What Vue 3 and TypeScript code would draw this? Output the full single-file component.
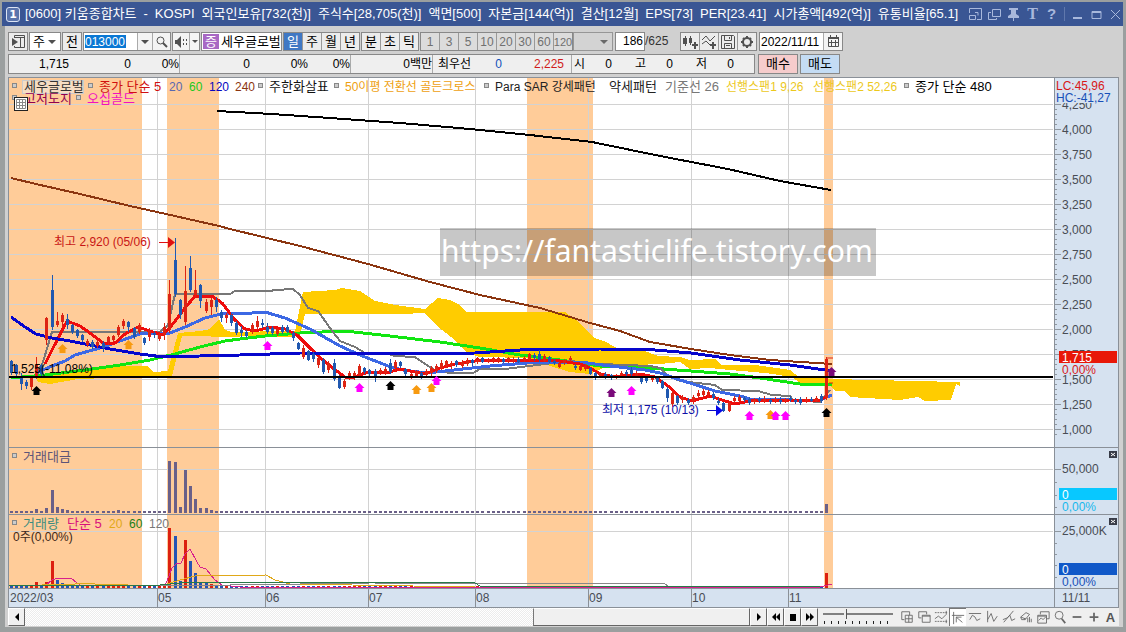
<script setup lang="ts">
import { ref } from 'vue'

type Candle = [x: number, high: number, top: number, bottom: number, low: number, up: 0 | 1]

const bands = [[9, 133], [167, 52], [527, 66], [824, 9]]
const months: [number, string][] = [[157, '05'], [265, '06'], [368, '07'], [475, '08'], [588, '09'], [691, '10'], [788, '11']]
const prices = ['4,000', '3,750', '3,500', '3,250', '3,000', '2,750', '2,500', '2,250', '2,000', '1,750', '1,500', '1,250', '1,000']

const candles: Candle[] = [
  [11, 360, 361, 373, 375, 0], [16, 364, 365, 374, 376, 0], [21, 373, 376, 384, 390, 0], [26, 380, 382, 386, 389, 0], [31, 376, 377, 387, 390, 1],
  [36, 357, 365, 376, 379, 1], [41, 364, 365, 374, 377, 0], [46, 317, 318, 340, 345, 1], [52, 275, 290, 327, 330, 0], [57, 312, 321, 325, 327, 1],
  [62, 313, 315, 322, 327, 1], [67, 314, 319, 325, 329, 0], [72, 324, 325, 332, 334, 0], [77, 329, 330, 336, 338, 0], [82, 334, 335, 340, 342, 0],
  [87, 339, 341, 345, 347, 1], [92, 340, 342, 347, 349, 0], [97, 340, 342, 346, 348, 1], [103, 341, 343, 348, 352, 0], [108, 336, 337, 342, 345, 1],
  [113, 335, 336, 340, 342, 1], [118, 325, 327, 335, 337, 1], [123, 319, 321, 326, 329, 1], [128, 321, 322, 327, 332, 0], [134, 327, 328, 337, 339, 0],
  [139, 323, 325, 332, 334, 1], [144, 337, 338, 343, 345, 0], [149, 328, 330, 337, 341, 1], [154, 331, 333, 335, 338, 0], [159, 333, 335, 339, 341, 1],
  [164, 323, 327, 335, 340, 1], [169, 280, 294, 330, 333, 1], [175, 238, 260, 294, 297, 0], [180, 299, 300, 315, 319, 0], [185, 266, 291, 322, 325, 1],
  [190, 256, 268, 290, 292, 0], [195, 270, 290, 295, 297, 1], [200, 284, 285, 301, 308, 0], [206, 299, 302, 311, 313, 1], [211, 298, 300, 307, 315, 1],
  [216, 297, 300, 307, 312, 0], [221, 310, 312, 318, 322, 0], [226, 313, 315, 318, 323, 1], [231, 313, 315, 323, 326, 0], [236, 321, 323, 333, 335, 0],
  [241, 326, 330, 333, 337, 0], [246, 330, 332, 336, 338, 0], [252, 323, 325, 331, 334, 1], [257, 316, 321, 327, 329, 1], [262, 319, 323, 325, 328, 0],
  [267, 323, 327, 332, 334, 0], [272, 326, 328, 333, 335, 0], [277, 328, 329, 334, 336, 1], [282, 325, 327, 332, 334, 0], [287, 325, 327, 332, 333, 0],
  [293, 331, 333, 338, 341, 0], [298, 342, 343, 349, 350, 0], [303, 345, 348, 357, 359, 1], [308, 350, 351, 360, 361, 0], [313, 352, 354, 359, 362, 0],
  [318, 357, 358, 365, 368, 1], [323, 358, 360, 372, 374, 0], [328, 361, 363, 370, 373, 1], [334, 359, 363, 379, 381, 0], [339, 375, 377, 388, 389, 0],
  [344, 379, 381, 387, 389, 1], [349, 371, 373, 378, 380, 1], [354, 371, 373, 378, 380, 1], [359, 364, 366, 375, 377, 1], [364, 367, 368, 372, 374, 0],
  [369, 369, 370, 374, 376, 0], [375, 369, 371, 377, 382, 0], [380, 368, 370, 373, 375, 1], [385, 367, 369, 373, 375, 1], [390, 359, 363, 372, 374, 0],
  [395, 360, 362, 368, 371, 1], [400, 361, 362, 366, 368, 0], [405, 368, 369, 374, 376, 0], [411, 372, 374, 376, 379, 1], [416, 370, 371, 376, 378, 1],
  [421, 371, 373, 377, 379, 0], [426, 369, 371, 375, 377, 1], [431, 366, 368, 373, 376, 1], [436, 364, 366, 370, 373, 1], [441, 360, 363, 368, 370, 1],
  [446, 360, 361, 366, 368, 1], [451, 361, 363, 366, 369, 1], [456, 360, 361, 365, 367, 0], [462, 360, 362, 366, 368, 1], [467, 358, 360, 364, 366, 1],
  [472, 359, 360, 363, 366, 0], [477, 357, 358, 362, 364, 1], [482, 357, 358, 362, 363, 0], [488, 358, 359, 361, 363, 1], [493, 357, 358, 361, 363, 1],
  [498, 357, 358, 361, 363, 1], [503, 358, 359, 362, 363, 0], [508, 357, 358, 361, 363, 1], [513, 357, 359, 361, 363, 1], [518, 357, 359, 362, 363, 0],
  [524, 356, 358, 360, 362, 1], [529, 353, 354, 360, 361, 1], [534, 353, 355, 358, 361, 0], [539, 350, 354, 360, 362, 0], [544, 354, 356, 361, 362, 1],
  [549, 356, 357, 362, 363, 0], [554, 359, 361, 363, 365, 0], [559, 361, 363, 367, 368, 1], [564, 359, 360, 363, 365, 1], [570, 356, 358, 360, 362, 1],
  [575, 364, 366, 368, 370, 0], [580, 364, 366, 370, 371, 1], [585, 364, 366, 369, 371, 1], [590, 367, 368, 374, 375, 0], [595, 372, 373, 377, 380, 0],
  [600, 372, 373, 376, 378, 1], [605, 372, 374, 378, 379, 0], [611, 374, 375, 378, 380, 0], [616, 374, 376, 378, 379, 1], [621, 371, 373, 375, 377, 1],
  [626, 370, 372, 374, 376, 0], [631, 367, 370, 374, 376, 0], [636, 371, 373, 376, 378, 1], [641, 376, 377, 382, 384, 0], [646, 376, 378, 381, 383, 0],
  [652, 375, 377, 380, 382, 1], [657, 377, 378, 382, 384, 0], [662, 380, 381, 388, 389, 0], [667, 387, 389, 398, 402, 0], [672, 391, 393, 404, 407, 1],
  [677, 395, 396, 403, 405, 0], [682, 395, 397, 400, 403, 1], [688, 398, 400, 403, 405, 0], [693, 395, 397, 401, 404, 1], [698, 390, 393, 396, 399, 1],
  [703, 389, 391, 395, 397, 1], [708, 390, 392, 395, 397, 1], [713, 392, 394, 398, 400, 0], [718, 398, 401, 403, 405, 0], [723, 402, 403, 411, 412, 0],
  [729, 402, 403, 411, 412, 1], [734, 396, 398, 401, 403, 1], [739, 395, 397, 401, 403, 1], [744, 396, 398, 400, 402, 0], [749, 397, 399, 403, 405, 0],
  [754, 398, 400, 402, 404, 1], [759, 397, 399, 401, 403, 0], [764, 396, 399, 401, 403, 1], [770, 398, 400, 402, 404, 0], [775, 397, 399, 401, 403, 1],
  [780, 397, 400, 402, 404, 0], [785, 398, 399, 401, 403, 1], [790, 396, 398, 400, 402, 0], [795, 398, 400, 402, 404, 0], [800, 397, 399, 403, 405, 0],
  [806, 397, 399, 401, 403, 1], [811, 397, 399, 401, 402, 0], [816, 396, 398, 401, 402, 1], [821, 394, 396, 401, 403, 0], [826, 357, 359, 398, 400, 1],
]

const lines: { color: string; width: number; points: string }[] = [
  { color: '#12e612', width: 3, points: '11,378 45,375 85,370 120,365 150,360 175,354 200,347 225,341 240,339 265,336 300,333 345,331 390,336 440,342 480,348 520,355 560,360 600,366 650,368 691,371 730,374 760,378 800,384 832,385' },
  { color: '#777777', width: 2, points: '36,371 42,365 52,332 160,332 168,325 175,294 230,294 235,291 270,291 275,290 293,289 300,295 308,308 318,311 330,328 340,341 355,347 365,353 385,353 395,356 415,357 425,364 435,370 450,373 473,373 480,369 505,369 545,364 570,361 600,364 650,366 660,368 668,376 680,381 715,385 722,390 758,391 772,395 790,396 793,400 820,402 830,390' },
  { color: '#3c68e4', width: 3, points: '36,373 52,366 65,361 75,355 100,348 120,341 140,334 170,333 185,327 205,318 225,313 240,314 265,312 285,318 310,329 340,346 360,355 388,366 403,370 427,373 445,371 490,366 540,362 580,362 610,366 645,370 660,373 677,379 693,384 715,391 740,396 750,399 790,400 820,400 832,395' },
  { color: '#ee0c0c', width: 3, points: '45,364 52,350 67,321 80,326 90,333 103,343 115,343 125,334 138,327 150,331 163,335 172,325 185,308 195,296 212,296 222,303 235,320 245,329 255,331 270,327 285,329 297,335 310,348 325,362 345,377 355,377 368,372 390,372 400,369 425,374 440,368 455,364 475,361 500,360 530,360 560,361 580,364 590,368 600,374 615,377 640,374 655,377 668,386 680,397 692,401 710,396 725,401 735,404 750,401 790,400 820,400 826,397' },
  { color: '#0606cc', width: 3, points: '11,317 25,327 36,334 52,338 70,341 110,349 140,354 163,357 200,356 240,355 300,353 430,354 475,353 520,350 600,349 655,350 691,353 740,360 790,365 832,371' },
  { color: '#8b3510', width: 2, points: '11,178 36,184 80,194 130,206 166,214 219,226 230,229 300,246 368,264 430,282 480,295 540,308 590,323 620,331 650,342 691,349 730,355 770,360 832,364' },
  { color: '#000000', width: 2, points: '217,111 272,114 330,118 400,123 470,129 530,135 592,142 660,156 728,169 780,181 831,190' },
]

const cloud = [
  '36,377 85,371 120,366 148,366 153,372 168,371 178,333 200,331 210,329 219,319 225,330 238,334 240,337 182,336 172,376 78,379 50,384 38,382',
  '225,332 295,331 303,292 335,290 342,288 360,291 375,301 395,305 425,309 438,298 450,300 458,304 466,312 565,312 580,323 594,338 606,342 620,350 645,351 658,356 680,357 690,360 715,359 722,365 755,365 790,370 800,378 850,379 853,380 935,381 938,382 960,382 960,386 956,384 951,400 925,401 918,397 900,400 850,397 845,391 835,391 830,386 805,386 793,378 780,375 765,373 730,370 710,368 690,369 680,362 660,364 635,365 610,365 590,374 570,372 550,366 530,358 480,357 467,353 455,340 437,326 425,313 400,314 305,314 300,335 290,337 225,336',
]

const arrows: [number, number, string][] = [
  [36, 386, '#000'], [62, 344, '#f79a10'], [128, 340, '#f79a10'], [267, 341, '#f0f'], [359, 383, '#f0f'], [390, 381, '#000'],
  [416, 385, '#f79a10'], [431, 383, '#f79a10'], [436, 376, '#f0f'], [611, 388, '#7a0a7a'], [631, 386, '#f0f'], [749, 411, '#f0f'],
  [770, 410, '#f79a10'], [775, 411, '#f0f'], [785, 411, '#f0f'], [826, 408, '#000'], [831, 367, '#7a0a7a'],
]

const valueTops: Record<number, number> = { 36: 509, 46: 508, 52: 490, 57: 507, 62: 509, 67: 510, 118: 510, 169: 461, 175: 462, 180: 507, 185: 470, 190: 486, 195: 499, 200: 508, 206: 508, 211: 510, 826: 504 }
const volumeTops: Record<number, number> = { 36: 582, 46: 582, 52: 561, 57: 580, 62: 583, 169: 528, 175: 536, 180: 581, 185: 540, 190: 561, 195: 573, 200: 582, 206: 582, 211: 584, 826: 573 }
const volumeUp: Record<number, boolean> = { 52: true, 57: false, 62: false, 195: false, 206: false }

function volumeColor(c: Candle): string {
  return (volumeUp[c[0]] ?? c[5] === 1) ? '#dc2010' : '#2454b4'
}

const volumeLines = [
  { color: '#d8208c', points: '46,585 52,580 58,578 72,579 80,585 165,586 172,568 176,564 181,563 185,554 190,549 197,562 200,567 206,569 215,580 222,585 240,587 820,587 832,584' },
  { color: '#e0a818', points: '9,586 75,584 85,583 95,584 160,586 180,580 195,576 266,575 275,580 290,584 475,587' },
  { color: '#888888', points: '160,586 370,583 665,584 668,586 785,586' },
  { color: '#287848', points: '9,585 160,585 180,583 390,582 475,583 480,586 820,586' },
]

const legend: { x: number; y: number; text: string; color: string; dot?: number; small?: boolean }[] = [
  { x: 24, y: 91, text: '세우글로벌', color: '#333', dot: 12 },
  { x: 99, y: 91, text: '종가 단순 5', color: '#d01010', dot: 88 },
  { x: 169, y: 91, text: '20', color: '#5a68b0', small: true },
  { x: 189, y: 91, text: '60', color: '#20c820', small: true },
  { x: 209, y: 91, text: '120', color: '#0808c0', small: true },
  { x: 235, y: 91, text: '240', color: '#8b3510', small: true },
  { x: 269, y: 91, text: '주한화살표', color: '#111', dot: 258 },
  { x: 345, y: 91, text: '50이평 전환선 골든크로스', color: '#eea010', dot: 334, small: true },
  { x: 495, y: 91, text: 'Para SAR 강세패턴', color: '#222', dot: 484, small: true },
  { x: 609, y: 91, text: '약세패턴', color: '#222' },
  { x: 665, y: 91, text: '기준선 26', color: '#777' },
  { x: 726, y: 91, text: '선행스팬1 9,26', color: '#ecc81c', small: true },
  { x: 813, y: 91, text: '선행스팬2 52,26', color: '#ecc81c', small: true },
  { x: 915, y: 91, text: '종가 단순 480', color: '#000', dot: 904 },
  { x: 24, y: 103, text: '고저도지', color: '#900050', dot: 12 },
  { x: 87, y: 103, text: '오십골드', color: '#f010c0', dot: 76 },
  { x: 23, y: 461, text: '거래대금', color: '#5c5478', dot: 12 },
  { x: 23, y: 528, text: '거래량', color: '#3c8c80', dot: 12 },
  { x: 67, y: 528, text: '단순 5', color: '#d8107c' },
  { x: 109, y: 528, text: '20', color: '#e0a818', small: true },
  { x: 129, y: 528, text: '60', color: '#188018', small: true },
  { x: 149, y: 528, text: '120', color: '#777', small: true },
]

const title = ['[0600] 키움종합차트', '-', 'KOSPI', '외국인보유[732(천)]', '주식수[28,705(천)]', '액면[500]', '자본금[144(억)]', '결산[12월]', 'EPS[73]', 'PER[23.41]', '시가총액[492(억)]', '유통비율[65.1]']
const periods = ['일', '주', '월', '년']
const intraday = ['분', '초', '틱']
const minutes = ['1', '3', '5', '10', '20', '30', '60', '120']
const active = ref('일')
const code = ref('013000')
const count = ref('186')
const date = ref('2022/11/11')
const zoomLevel = ref(32)
</script>

<template>
  <main class="window">
    <header class="titlebar">
      <span class="num">1</span>
      <h1 class="title"><span v-for="t in title" :key="t">{{ t }}</span></h1>
      <div class="winbtns">
        <button aria-label="축소"><svg width="13" height="13" viewBox="0 0 13 13"><path d="M.5 5V.5h12v11H8M.5 7.500h6v4h-6zM6 4.500h3v3" /></svg></button>
        <button aria-label="복제"><svg width="13" height="13" viewBox="0 0 13 13"><path d="M4.500 1.500h8v7h-8zM3 4.500H.5v7h8V10" /></svg></button>
        <button aria-label="고정"><svg width="13" height="13" viewBox="0 0 13 13"><path class="solid" d="M2 0h9v2H9v4l3 2v2H7v3H6v-3H1V8l3-2V2H2z" /></svg></button>
        <button class="serif" aria-label="글꼴">T</button>
        <button class="bold" aria-label="도움말">?</button>
        <i class="sep"></i>
        <button aria-label="최소화"><svg width="13" height="13" viewBox="0 0 13 13"><path class="thick" d="M2 10h9" /></svg></button>
        <button aria-label="최대화"><svg width="13" height="13" viewBox="0 0 13 13"><path d="M2 3.500h9v7H2zM2 4.500h9" /></svg></button>
        <button aria-label="닫기"><svg width="13" height="13" viewBox="0 0 13 13"><path d="M2 2l9 9M11 2l-9 9" /></svg></button>
      </div>
    </header>

    <div class="body">
      <div class="toolbar">
        <button class="b w20" aria-label="패널"><svg width="15" height="15" viewBox="0 0 15 15"><path class="ink" d="M3.500 4V1.500h10v12h-10V12M4 3.500h10M9.500 4v9" /><path class="fill" d="M1 4l6 4-6 4z" /></svg></button>
        <label class="sel w32"><select aria-label="구분"><option>주</option></select><svg width="8" height="4" viewBox="0 0 8 4"><path class="fill" d="M0 0h8L4 4z" /></svg></label>
        <button class="b w20">전</button>
        <div class="combo">
          <input v-model="code" class="code" aria-label="종목코드">
          <button class="part w15" aria-label="종목 목록"><svg width="8" height="4" viewBox="0 0 8 4"><path class="fill" d="M0 0h8L4 4z" /></svg></button>
          <button class="part w18" aria-label="검색"><svg width="14" height="14" viewBox="0 0 14 14"><circle class="ink" cx="5.500" cy="5.500" r="3.500" /><path class="ink w2" d="M8 8l4 4" /></svg></button>
        </div>
        <div class="combo">
          <button class="part w16" aria-label="소리"><svg width="14" height="12" viewBox="0 0 14 12"><path class="fill" d="M1 4h2l4-4v12L3 8H1zM9 3h1v2H9zM12 3h1v2h-1zM9 7h1v2H9zM12 7h1v2h-1z" /></svg></button>
          <button class="part w10" aria-label="소리 설정"><svg width="6" height="3" viewBox="0 0 6 3"><path class="fill" d="M0 0h6L3 3z" /></svg></button>
        </div>
        <div class="stock"><span class="tag">증</span><span class="name">세우글로벌</span></div>
        <div class="group g1"><button v-for="p in periods" :key="p" :class="{ on: active === p }" @click="active = p">{{ p }}</button></div>
        <div class="group g1"><button v-for="p in intraday" :key="p" :class="{ on: active === p }" @click="active = p">{{ p }}</button></div>
        <div class="group mins"><button v-for="m in minutes" :key="m">{{ m }}</button></div>
        <label class="sel w39 off"><select aria-label="분 선택" disabled><option></option></select><svg width="8" height="4" viewBox="0 0 8 4"><path class="fill" d="M0 0h8L4 4z" /></svg></label>
        <label class="count"><input v-model="count" aria-label="봉 개수"><span>/625</span></label>
        <div class="group tools">
          <button aria-label="차트 유형"><svg width="16" height="16" viewBox="0 0 16 16"><path class="fill" d="M1 4h4v6H1zM3 2h1v10H3zM7 4h3v5H7zM8 2h1v9H8zM12 8h2v2h2v2h-2v3h-2v-3h-2v-2h2z" /></svg></button>
          <button aria-label="지표 추가"><svg width="16" height="16" viewBox="0 0 16 16"><path class="ink" d="M1 6l4-4 4 5 5-5M1 10l4-3 4 4" /><path class="fill" d="M11 8h2v2h2v2h-2v3h-2v-3H9v-2h2z" /></svg></button>
          <button aria-label="저장"><svg width="16" height="16" viewBox="0 0 16 16"><path class="ink" d="M1.500 1.500h12l1 1v12h-13zM4.500 2v4.500h7V2M4.500 14V9.500h7V14M9.500 3v2M6 11.500h4" /></svg></button>
          <button aria-label="설정"><svg width="16" height="16" viewBox="0 0 16 16"><circle class="ink w2" cx="8" cy="8" r="4" /><path class="ink w2" d="M8 2v2M8 12v2M2 8h2M12 8h2M4 4l1 1M11 11l1 1M12 4l-1 1M5 11l-1 1" /></svg></button>
        </div>
        <div class="combo date">
          <input v-model="date" aria-label="날짜">
          <button class="part w19" aria-label="달력"><svg width="13" height="13" viewBox="0 0 13 13"><path class="ink" d="M1.500 3.500h10v8h-10zM4.500 5v6M8.500 5v6M2 7.500h9" /><path class="fill" d="M1 2h11v2H1zM3 0h1v3H3zM9 0h1v3H9z" /></svg></button>
        </div>
      </div>

      <div class="quotes">
        <div class="strip">
          <span class="c61">1,715</span><span class="c62">0</span><span class="c48 end">0%</span>
          <span class="c70">0</span><span class="c58">0%</span><span class="c43 end">0%</span>
          <span class="c82 end">0백만</span>
          <span class="c38">최우선</span><span class="c31 blue">0</span><span class="c62 red">2,225</span><span class="c9 end"></span>
          <span class="c12">시</span><span class="c28">0</span><span class="c34">고</span><span class="c28">0</span><span class="c34">저</span><span class="c28">0</span><span class="c20"></span>
        </div>
        <button class="order buy">매수</button>
        <button class="order sell">매도</button>
      </div>

      <section class="chart" aria-label="세우글로벌 일봉 차트">
        <svg class="plot" viewBox="8 77 1111 531">
          <rect x="8" y="77" width="1111" height="531" fill="#fff" />
          <rect v-for="b in bands" :key="b[0]" :x="b[0]" y="78" :width="b[1]" height="510" fill="#fc9" />
          <g class="grid">
            <path v-for="(p, i) in prices" :key="p" :d="`M9 ${129.5 + i * 25}H1053`" />
            <path d="M9 104.500H1053M9 469.500H1053M9 531.500H1053" />
            <path v-for="m in months" :key="m[1]" :d="`M${m[0] + 0.5} 78V588`" />
          </g>

          <g shape-rendering="crispEdges">
            <polygon v-for="c in cloud" :key="c" :points="c" fill="#fc0" />
            <polyline v-for="l in lines" :key="l.color" :points="l.points" fill="none" :stroke="l.color" :stroke-width="l.width" stroke-linejoin="round" />
          </g>
          <g v-for="c in candles" :key="c[0]" :fill="c[5] ? '#dc2414' : '#2058b0'">
            <rect :x="c[0]" :y="c[1]" width="1" :height="c[4] - c[1]" />
            <rect :x="c[0] - 1" :y="c[2]" width="3" :height="c[3] - c[2]" />
          </g>
          <path d="M827 358h6M829 383h4" stroke="#dc2414" />
          <path d="M9 377H1053" stroke="#000" stroke-width="2" />
          <path v-for="a in arrows" :key="a[0]" :d="`M${a[0] + 0.5} ${a[1]}l5 5h-2v4h-6v-4h-2z`" :fill="a[2]" />

          <path d="M159 242.500h9" stroke="#e01010" /><path d="M168 237l7 5.500-7 5.500z" fill="#e01010" />
          <text class="sm" x="54" y="246" fill="#c81414">최고 2,920 (05/06)</text>
          <path d="M707 410.500h9" stroke="#0808c8" /><path d="M716 405l7 5.500-7 5.500z" fill="#0808e8" />
          <text class="sm" x="602" y="414" fill="#1010a8">최저 1,175 (10/13)</text>
          <text class="sm" x="11" y="373" fill="#000">1,525(-11,08%)</text>

          <g fill="#6a6088">
            <rect v-for="c in candles" :key="c[0]" :x="c[0] - 1" :y="valueTops[c[0]] ?? 511" width="3" :height="513 - (valueTops[c[0]] ?? 511)" />
          </g>
          <rect v-for="c in candles" :key="c[0]" :x="c[0] - 1" :y="volumeTops[c[0]] ?? 586" width="3" :height="588 - (volumeTops[c[0]] ?? 586)" :fill="volumeColor(c)" />
          <polyline v-for="l in volumeLines" :key="l.color" :points="l.points" fill="none" :stroke="l.color" shape-rendering="crispEdges" />

          <rect x="22.500" y="80.500" width="61" height="13" fill="#eee" fill-opacity=".5" stroke="#ccc" />
          <g v-for="l in legend" :key="l.x + l.text">
            <rect v-if="l.dot" :x="l.dot + 0.5" :y="l.y - 7.5" width="4" height="4" fill="#ccc" stroke="#888" />
            <text :class="{ sm: l.small }" :x="l.x" :y="l.y" :fill="l.color">{{ l.text }}</text>
          </g>
          <text class="sm" x="13" y="541" fill="#402818">0주(0,00%)</text>

          <rect x="440" y="228" width="436" height="48" fill="#000" fill-opacity=".22" />
          <text class="mark" x="441" y="262">https://fantasticlife.tistory.com</text>

          <rect x="1054" y="77" width="65" height="531" fill="#d6e2f0" />
          <rect x="8" y="589" width="1111" height="19" fill="#d6e2f0" />
          <g class="ticks">
            <path v-for="n in 67" :key="n" :d="`M1054 ${104.5 + (n - 1) * 5}h${(n - 1) % 5 ? 3 : 7}`" />
            <path d="M1054 469.500h7M1054 482.500h3M1054 495.500h3M1054 507.500h3M1054 531.500h7M1054 543.500h3M1054 554.500h3M1054 565.500h3M1054 577.500h3" />
          </g>
          <g class="rules">
            <path d="M8.500 77V608M8 77.500H1119M8 447.500H1119M8 514.500H1119M8 588.500H1119M8 607.500H1119M1054.500 77V608M1118.500 77V608" />
            <path v-for="m in months" :key="m[1]" :d="`M${m[0] + 0.5} 588V608`" />
          </g>
          <g class="sm" fill="#484c54">
            <text x="1062" y="109">4,250</text>
            <text v-for="(p, i) in prices" :key="p" x="1062" :y="134 + i * 25">{{ p }}</text>
            <text x="1062" y="473">50,000</text>
            <text x="1062" y="535">25,000K</text>
            <text x="1062" y="602">11/11</text>
            <text x="10" y="602">2022/03</text>
            <text v-for="m in months" :key="m[1]" :x="m[0] + 1" y="602">{{ m[1] }}</text>
          </g>
          <rect x="1055" y="79" width="62" height="24" fill="#d6e2f0" />
          <rect x="1060" y="363" width="57" height="12" fill="#d6e2f0" />
          <rect x="1059" y="351" width="58" height="12" fill="#e81808" />
          <rect x="1059" y="488" width="58" height="12" fill="#08c8ff" />
          <rect x="1059" y="563" width="58" height="12" fill="#1058c8" />
          <g class="sm">
            <text x="1056" y="90" fill="#d81818">LC:45,96</text>
            <text x="1056" y="102" fill="#1850b8">HC:-41,27</text>
            <text x="1062" y="362" fill="#fff">1,715</text>
            <text x="1062" y="374" fill="#d81818">0,00%</text>
            <text x="1062" y="499" fill="#fff">0</text>
            <text x="1062" y="511" fill="#18b8ec">0,00%</text>
            <text x="1062" y="574" fill="#fff">0</text>
            <text x="1062" y="586" fill="#1850b8">0,00%</text>
          </g>
        </svg>
        <button class="gridbtn" aria-label="데이터 표"><svg width="12" height="12" viewBox="0 0 12 12"><path d="M1.500 1.500h9v9h-9zM1 4.500h10M1 7.500h10M4.500 1v10M7.500 1v10" /></svg></button>
        <button class="x x1" aria-label="거래대금 닫기"><svg width="8" height="7" viewBox="0 0 8 7"><path d="M2 2l4 3M6 2L2 5" /></svg></button>
        <button class="x x2" aria-label="거래량 닫기"><svg width="8" height="7" viewBox="0 0 8 7"><path d="M2 2l4 3M6 2L2 5" /></svg></button>
      </section>

      <footer class="bottom">
        <button class="r" aria-label="이전"><svg width="10" height="10" viewBox="0 0 10 10"><path d="M7 1v8L3 5z" /></svg></button>
        <div class="track"><div class="thumb"></div></div>
        <button class="r" aria-label="다음"><svg width="10" height="10" viewBox="0 0 10 10"><path d="M3 1v8l4-4z" /></svg></button>
        <button class="r" aria-label="뒤로"><svg width="10" height="10" viewBox="0 0 10 10"><path d="M5 1v8L1 5zM9 1v8L5 5z" /></svg></button>
        <button class="r" aria-label="정지"><svg width="10" height="10" viewBox="0 0 10 10"><path d="M2 2h6v7H2z" /></svg></button>
        <button class="r" aria-label="앞으로"><svg width="10" height="10" viewBox="0 0 10 10"><path d="M1 1v8l4-4zM5 1v8l4-4z" /></svg></button>
        <div class="slide"><input v-model="zoomLevel" type="range" min="0" max="100" aria-label="봉 간격"></div>
        <div class="icons">
          <button aria-label="창 추가"><svg viewBox="0 0 16 16"><path d="M5 11H2V2h9v4M6 6h8v8H6zM10 6v8M6 10h8" /></svg></button>
          <button aria-label="창 겹치기"><svg viewBox="0 0 16 16"><path d="M5 9H2V2h9v3M6 6h9v8H6zM6 7h9" /></svg></button>
          <button aria-label="구간"><svg viewBox="0 0 16 16"><path stroke-dasharray="2 1" d="M1 3h14M1 13h14" /><path d="M1 10l4-3 4 3 5-5M14 1v4M14 11v4" /></svg></button>
          <button class="down" aria-label="십자선"><svg viewBox="0 0 16 16"><path d="M3 1v14M1 5h14M6 7l7 6M6 7v6M6 7h6" /></svg></button>
          <button aria-label="수평선"><svg viewBox="0 0 16 16"><path d="M1 4h14M2 11l3-5 3 2 2 4 4-2" /></svg></button>
          <button aria-label="수직선"><svg viewBox="0 0 16 16"><path d="M3 1v13M3 11l4-7 3 9 4-6" /></svg></button>
          <button aria-label="추세선"><svg viewBox="0 0 16 16"><path d="M2 14L13 1M1 11l5-2 3-3 2 6 4-2" /></svg></button>
          <button aria-label="지우개"><svg viewBox="0 0 16 16"><path d="M2 8l6-5 4 2-5 6H3zM2 8l5 2M7 11V9M10 14V9M12 14V8M14 14v-4" /></svg></button>
          <button aria-label="차트 복사"><svg viewBox="0 0 16 16"><path d="M5 5V2h10v8h-3M2 6h10v9H2zM2 7h10M3 12l3-3 2 2 3-3" /></svg></button>
          <button aria-label="돋보기"><svg viewBox="0 0 16 16"><circle cx="7" cy="6" r="4.500" /><path class="t2" d="M10 10l4 5" /></svg></button>
          <button aria-label="축소"><svg viewBox="0 0 16 16"><path class="t2" d="M3 8h10" /></svg></button>
          <button aria-label="확대"><svg viewBox="0 0 16 16"><path class="t2" d="M3 8h10M8 3v10" /></svg></button>
          <button class="auto" aria-label="자동">A</button>
        </div>
      </footer>
    </div>
  </main>
</template>

<style>
body { margin: 0; background: #9b9f9f; }
</style>

<style scoped>
.window { box-sizing: border-box; min-height: 100vh; padding: 2px 3px 5px 2px; background: #9b9f9f; font: 13px/16px "Liberation Sans", "Noto Sans CJK KR", sans-serif; color: #000; }
button, input, select { box-sizing: border-box; margin: 0; padding: 0; border: 0; border-radius: 0; font: inherit; color: inherit; background: none; outline: 0; }
button { display: flex; align-items: center; justify-content: center; white-space: nowrap; }
svg { display: block; }
.titlebar { display: flex; align-items: center; height: 24px; background: #3a5694; color: #fff; padding: 0 1px 0 4px; }
.num { width: 12px; height: 13px; border: 1px solid #dce4f4; border-radius: 3px; font: bold 11px/13px "DejaVu Sans", sans-serif; text-align: center; background: #5a74ac; }
.title { margin: 0 0 0 5px; font-size: 13px; font-weight: 400; display: flex; gap: 7px; white-space: nowrap; }
.winbtns { margin-left: auto; display: flex; align-items: center; gap: 6px; color: #a8b8dc; }
.winbtns button { width: 13px; height: 16px; }
.winbtns path { fill: none; stroke: #a8b8dc; }
.winbtns .solid { fill: #a8b8dc; stroke: none; }
.winbtns .thick { stroke-width: 2; }
.winbtns .serif { font: bold 16px/16px "Liberation Serif", serif; }
.winbtns .bold { font: bold 15px/16px "Liberation Sans", sans-serif; }
.sep { width: 1px; height: 14px; background: #6078ac; }
.body { margin-left: 3px; padding: 6px 4px 1px 3px; background: #d0d0d0; }
.toolbar { display: flex; height: 19px; gap: 1px; }
.ink { fill: none; stroke: #505050; }
.fill { fill: #505050; }
.w2 { stroke-width: 2; }
.b, .combo, .stock, .group, .sel { box-sizing: border-box; border: 1px solid #888; background: #ececec; }
.w10 { width: 10px; } .w15 { width: 15px; } .w16 { width: 16px; } .w18 { width: 18px; } .w19 { width: 19px; } .w20 { width: 20px; } .w32 { width: 32px; } .w39 { width: 40px; }
.combo, .stock, .group { display: flex; }
.sel { position: relative; background: #fff; }
.sel select { width: 100%; height: 17px; padding-left: 3px; appearance: none; }
.sel svg { position: absolute; right: 4px; top: 7px; }
.off { background: #d4d4d4; opacity: .8; margin-left: -1px; }
.off select { opacity: 1; }
.part { border-left: 1px solid #aaa; background: #f4f4f4; }
.combo > .part:first-child { border-left: 0; }
.code { width: 53px; background: linear-gradient(#0a78d4, #0a78d4) 1px 2px / 41px 13px no-repeat #fff; color: #fff; padding-left: 1px; font-size: 12px; }
.stock { width: 81px; background: #fff; }
.tag { width: 16px; margin: 1px 0 1px 1px; background: #a868c4; color: #fff; text-align: center; line-height: 15px; }
.name { margin-left: 2px; line-height: 17px; white-space: nowrap; }
.group button { width: 19px; border-left: 1px solid #999; background: #ececec; }
.group button:first-child { border-left: 0; width: 18px; }
.group .on { background: #4078c4; color: #fff; }
.mins { color: #707070; font-size: 12px; }
.mins button { background: #dcdcdc; }
.mins button:last-child { font-size: 11px; }
.count { display: flex; width: 64px; margin-left: 1px; color: #333; line-height: 19px; font-size: 12px; }
.count input { width: 30px; border: 1px solid #888; background: #fff; text-align: right; padding-right: 1px; color: #000; }
.tools button { width: 19px; }
.date { margin-left: 1px; }
.date input { width: 63px; background: #fff; padding-left: 1px; font-size: 12px; }
.quotes { display: flex; gap: 2px; margin: 3px 0; height: 20px; }
.strip { display: flex; box-sizing: border-box; border: 1px solid #888; background: #efefef; line-height: 18px; text-align: right; margin-right: 1px; white-space: nowrap; font-size: 12px; }
.strip .end { border-right: 1px solid #aaa; }
.c9 { width: 7px; } .c12 { width: 13px; } .c20 { width: 20px; } .c28 { width: 27px; } .c31 { width: 31px; } .c34 { width: 34px; } .c38 { width: 38px; } .c43 { width: 42px; } .c48 { width: 48px; } .c58 { width: 58px; } .c61 { width: 60px; } .c62 { width: 62px; } .c70 { width: 70px; } .c82 { width: 81px; }
.blue { color: #1050b8; } .red { color: #d01c1c; }
.order { width: 40px; border: 1px solid #888; }
.buy { background: #f6cccc; } .sell { background: #c4dcf4; }
.chart { position: relative; }
.plot { width: 100%; height: auto; font-size: 13px; }
.sm { font-size: 12px; }
.grid path { stroke: #d2d2d2; }
.ticks path { stroke: #9098a0; }
.rules path { stroke: #8a9098; }
.mark { font: 30px "Noto Sans", sans-serif; fill: #fff; }
.gridbtn { position: absolute; left: 6px; top: 20px; width: 14px; height: 14px; background: #fff; border: 1px solid #222; }
.gridbtn path { fill: none; stroke: #888; }
.x { position: absolute; right: 2px; width: 8px; height: 7px; background: #383c48; }
.x path { stroke: #fff; }
.x1 { top: 374px; } .x2 { top: 441px; }
.bottom { display: flex; height: 18px; background: #efefef; align-items: stretch; }
.r { width: 17px; background: #f0f0f0; border: 1px solid; border-color: #fff #666 #666 #fff; }
.track { flex: 1; display: flex; background: repeating-conic-gradient(#fff 0 25%, #ececec 0 50%) 0 0 / 2px 2px; }
.thumb { width: 30%; margin-left: auto; box-sizing: border-box; border: 1px solid; border-color: #fff #666 #666 #777; background: #f0f0f0; }
.slide { width: 70px; margin: 0 5px; background: repeating-linear-gradient(90deg, #222 0 1px, transparent 1px 7px) 1px 13px / 100% 3px no-repeat; }
.slide input { display: block; width: 100%; height: 12px; appearance: none; background: linear-gradient(#808080, #808080) 0 5px / 100% 2px no-repeat; }
.slide input::-webkit-slider-thumb { appearance: none; width: 3px; height: 10px; background: #eee; border-right: 1px solid #555; }
.icons { display: flex; }
.icons button { width: 17px; }
.icons svg { width: 14px; height: 14px; }
.icons path, .icons circle { fill: none; stroke: #666; }
.icons .t2 { stroke-width: 2; }
.icons .down { border-left: 1px solid #777; border-top: 1px solid #777; background: #fff; }
.icons .auto { font: bold 13px "Liberation Sans", sans-serif; color: #555; }
</style>
